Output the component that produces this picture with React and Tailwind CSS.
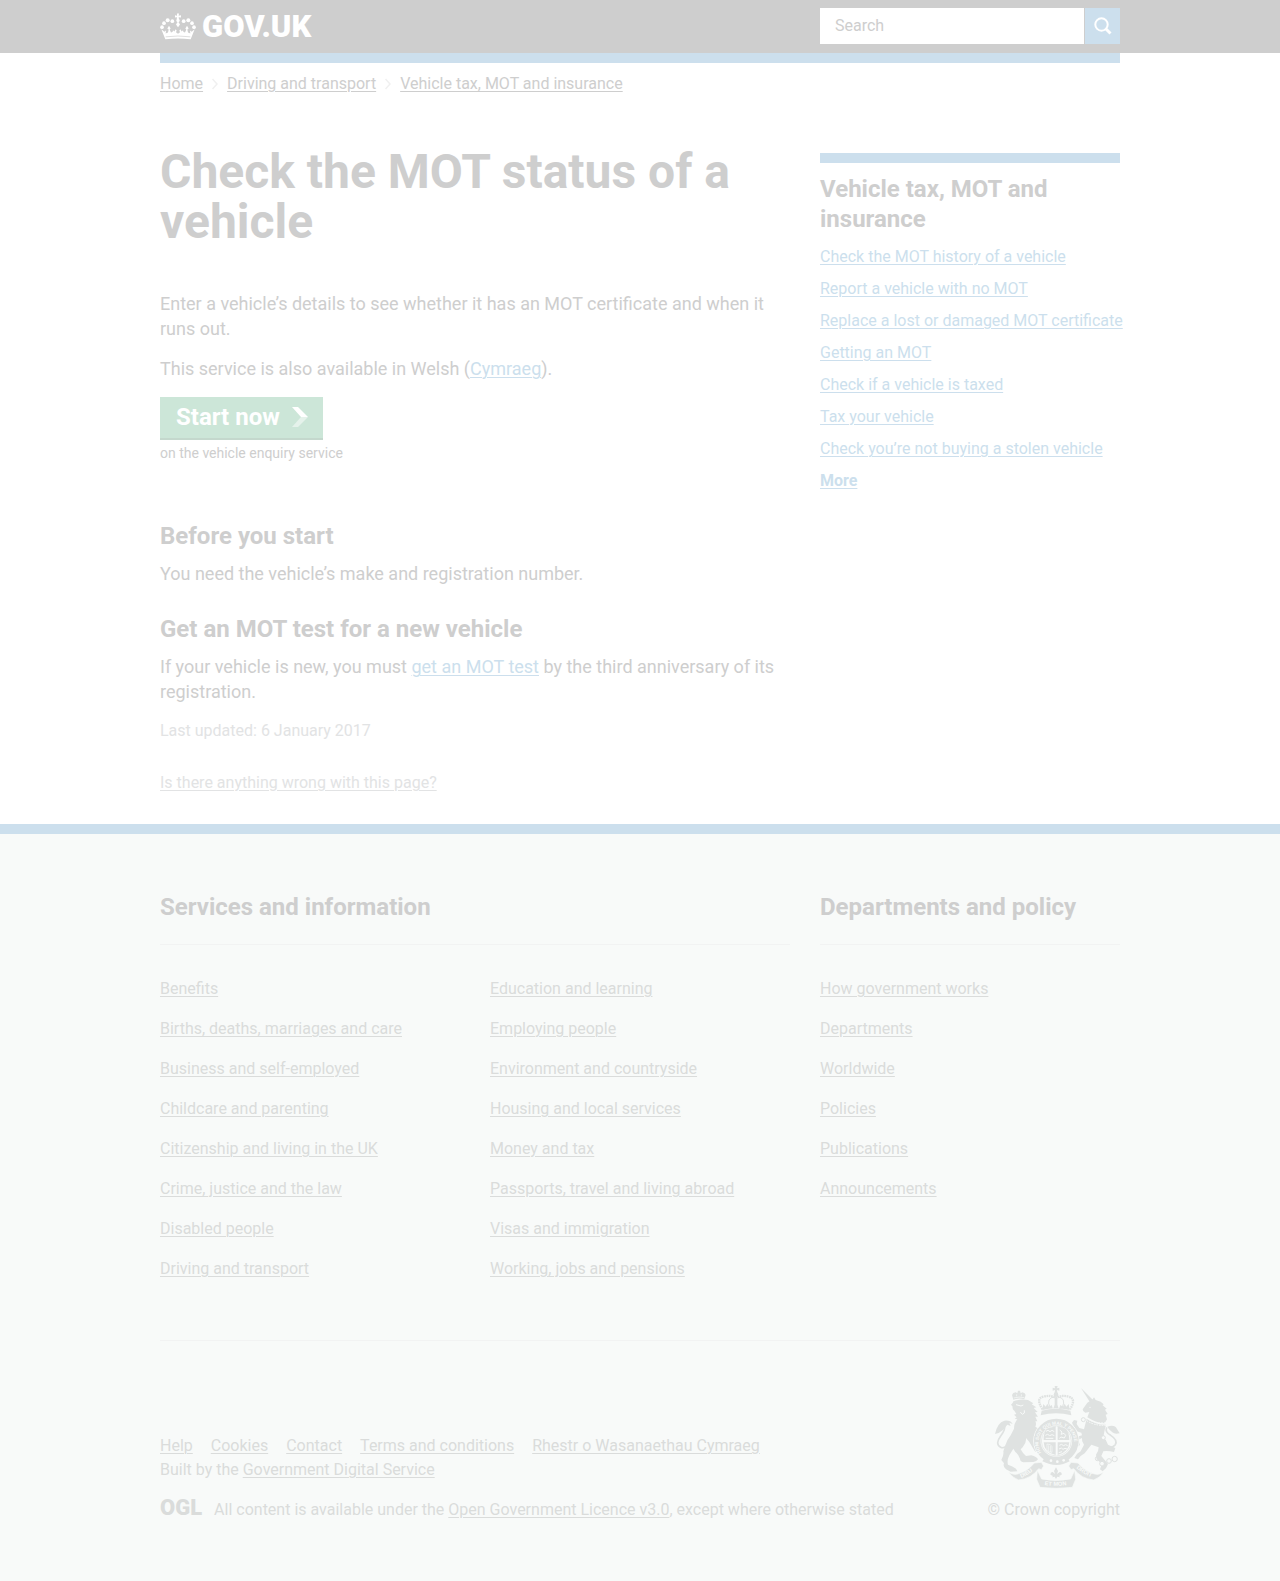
import React from "react";

const relatedLinks = [
  "Check the MOT history of a vehicle",
  "Report a vehicle with no MOT",
  "Replace a lost or damaged MOT certificate",
  "Getting an MOT",
  "Check if a vehicle is taxed",
  "Tax your vehicle",
  "Check you’re not buying a stolen vehicle",
];

const servicesLeft = [
  "Benefits",
  "Births, deaths, marriages and care",
  "Business and self-employed",
  "Childcare and parenting",
  "Citizenship and living in the UK",
  "Crime, justice and the law",
  "Disabled people",
  "Driving and transport",
];

const servicesRight = [
  "Education and learning",
  "Employing people",
  "Environment and countryside",
  "Housing and local services",
  "Money and tax",
  "Passports, travel and living abroad",
  "Visas and immigration",
  "Working, jobs and pensions",
];

const departments = [
  "How government works",
  "Departments",
  "Worldwide",
  "Policies",
  "Publications",
  "Announcements",
];

const metaLinks = [
  "Help",
  "Cookies",
  "Contact",
  "Terms and conditions",
  "Rhestr o Wasanaethau Cymraeg",
];

function Link({ children, className = "" }) {
  return (
    <a href="#" className={`underline underline-offset-2 decoration-1 ${className}`}>
      {children}
    </a>
  );
}

function CrownLogo() {
  return (
    <svg viewBox="30 36 108 80" className="h-[27px] w-[36px]" fill="#fff" aria-hidden="true">
      <path d="M81 37h6l-1 7 7-2v7l-7-1 1 7h-7l1-7-6 1v-7l6 2z" />
      <circle cx="84" cy="58" r="5" />
      <path d="M84 60l6 10-6 8-6-8z" />
      <circle cx="53" cy="57" r="6" />
      <circle cx="67" cy="60" r="5.500" />
      <circle cx="42" cy="66" r="5.500" />
      <circle cx="36" cy="78" r="5.500" />
      <circle cx="115" cy="57" r="6" />
      <circle cx="101" cy="60" r="5.500" />
      <circle cx="126" cy="66" r="5.500" />
      <circle cx="132" cy="78" r="5.500" />
      <path d="M34 84L43 92L48 88L47 97L54 94L56 85L52 82L57 74L62 82L59 85L63 94Q69 94 69 87L73 91L77 84L80 88L78 93L84 98L90 93L88 88L91 84L95 91L99 87Q99 94 105 94L109 85L106 82L111 74L116 82L112 85L114 94L121 97L120 88L125 92L134 84L122 114Q84 110 46 114z" />
      <path d="M47 107q37-5 74 0" fill="none" stroke="#cecece" strokeWidth="2" />
    </svg>
  );
}

function RoyalArms() {
  const grey = "#dfe2e1";
  const paper = "#f8faf9";
  return (
    <svg viewBox="72 45 378 312" className="h-[104px] w-[126px]" role="img" aria-label="Royal coat of arms">
      <defs>
        <path id="garter" d="M214 248A54 54 0 1 1 304 248" />
        <path id="dieu" d="M148 326Q180 314 206 286" />
        <path id="mon" d="M214 343Q258 352 306 343" />
        <path id="droit" d="M314 290Q344 318 382 326" />
      </defs>

      {/* imperial crown above the shield */}
      <g fill={grey}>
        <path d="M254 48h9l-2 7 7-2v9l-7-2 1 9h-8l1-9-7 2v-9l7 2z" />
        <circle cx="258" cy="74" r="7" />
        <path d="M215 122q43-12 86 0l3 14q-46-12-92 0z" />
        <path d="M217 120l3-18 7 8 5-9 5 9 8-5 4 12 9-20 9 20 4-12 8 5 5-9 5 9 7-8 3 18q-43-10-82 0z" />
        <path d="M254 82h8v30h-8z" />
      </g>
      <g fill="none" stroke={grey}>
        <path d="M218 118Q196 86 220 80Q242 74 258 84Q274 74 296 80Q320 86 300 118" strokeWidth="7" strokeDasharray="5 2" />
        <path d="M240 112Q226 84 256 80M277 112Q290 84 262 80" strokeWidth="3" />
      </g>

      {/* lion */}
      <g fill={grey}>
        <path d="M130 89L126 75Q128 68 137 67L142 70 144 62 150 62 152 70 157 67Q166 69 167 75L163 88Q147 83 130 89z" />
        <path d="M130 94Q150 86 174 90L190 100 185 103 199 112 191 114 203 126 195 127 204 140 196 140 202 154 196 154Q200 162 196 170L206 176 214 186 208 190 212 200 203 200 206 212 196 206 200 214 214 226 208 232 212 240 202 238 196 246 190 236 178 216 168 204Q170 218 158 232L152 238Q158 250 168 258L184 256Q200 260 204 268 200 275 190 276L160 277Q150 274 150 266 146 254 136 246L130 236 118 256Q110 272 114 284 128 288 138 296L142 304 122 305 108 298Q98 290 102 280L94 270Q102 256 100 244L106 226Q112 208 122 196L132 176Q132 160 142 148L134 146 140 142 132 134 139 132 133 122Q126 118 128 110L123 104Q129 100 130 94z" />
        <path d="M75 192Q82 158 103 152 122 150 128 162L118 158 122 168 112 164 99 180Q88 190 75 192z" />
      </g>
      <path d="M103 162Q108 178 92 198 74 222 92 232 100 236 110 228" fill="none" stroke={grey} strokeWidth="5" />
      <g fill="none" stroke={paper}>
        <path d="M138 104l15 4 7-3M163 121v8l-6 4-6-7" strokeWidth="3" />
        <path d="M131 84q16-5 32-1M140 73v6M154 73v6" strokeWidth="2" />
      </g>

      {/* unicorn */}
      <g fill={grey}>
        <path d="M333 54L369 90 359 95z" />
        <path d="M338 118L352 98 368 88 372 82 377 90 392 95 401 103 398 106 410 116 405 119 413 132 407 134 411 148 404 160Q380 160 352 142L358 126 346 128Q338 126 338 118z" />
        <path d="M350 146Q380 166 408 164L404 180 400 202Q410 210 414 224L436 234 432 246Q414 242 400 244L394 258 414 282Q410 296 398 304L390 298 396 282 380 268 378 254Q386 244 386 232L364 224 344 250Q332 256 324 268L313 264Q320 250 332 244L342 224Q334 214 336 204L324 210 330 224 324 230 316 214Q320 200 336 196L334 188 320 184 312 172 306 158 312 150 322 152 320 162 328 174 342 178z" />
        <path d="M412 170Q434 162 441 177L449 190Q434 194 427 187L417 178z" />
      </g>
      <path d="M410 172Q404 186 422 196 444 210 436 224 428 234 412 232" fill="none" stroke={grey} strokeWidth="5" />
      <path d="M349 144q24 18 59 14M350 152q24 16 58 14" fill="none" stroke={paper} strokeWidth="3" strokeDasharray="5 3" />
      <circle cx="360" cy="112" r="2" fill={paper} />
      <g fill="none" stroke={grey} strokeWidth="3">
        <circle cx="382" cy="266" r="6" />
        <circle cx="396" cy="281" r="7" fill={paper} />
        <circle cx="417" cy="273" r="7" />
        <circle cx="434" cy="267" r="8" />
        <circle cx="400" cy="203" r="6" fill={paper} />
        <circle cx="340" cy="149" r="6" />
      </g>

      {/* garter and shield */}
      <circle cx="259" cy="213" r="68" fill="none" stroke={paper} strokeWidth="3" />
      <circle cx="259" cy="213" r="57" fill="none" stroke={grey} strokeWidth="19" />
      <circle cx="259" cy="213" r="45" fill={paper} stroke={grey} strokeWidth="2" />
      <text fill={paper} fontSize="14" fontWeight="700" fontFamily="Liberation Sans, sans-serif">
        <textPath href="#garter">HONI SOIT QUI MAL Y PENSE</textPath>
      </text>
      <g fill={grey}>
        <path d="M230 176l27-7v41h-36q-1-20 9-34zM263 169l25 7q10 14 10 34h-35zM221 217h36v38q-34-6-36-38zM263 217h35q-2 30-35 38z" />
      </g>
      <g fill="none" stroke={paper} strokeWidth="3">
        <path d="M228 184l6-3 6 4 6-4 7 4M226 196l7-3 6 4 7-3 7 3M227 205h23" />
        <path d="M269 180l7 6-3 7 9-3 5 6-4 8-10-3-5 4" />
        <path d="M268 226l7-3 5 4 7-3 6 3M267 237l7-3 5 4 6-3 6 2M266 248l10-3" />
        <path d="M231 222v17q2 8 15 8V230q-3-8-15-8M236 226v17M241 228v18" strokeWidth="2" />
      </g>
      <path d="M225 262q32 18 66 0l8 12q-38 22-82 0z" fill={grey} />
      <g fill={paper}>
        <circle cx="243" cy="272" r="4" />
        <circle cx="262" cy="275" r="4" />
        <circle cx="281" cy="271" r="4" />
      </g>

      {/* motto scroll */}
      <g fill={grey} stroke={paper} strokeWidth="2">
        <path d="M116 307Q132 316 143 312 172 304 193 279L214 277 221 288 214 299 206 296Q184 326 146 330 128 324 116 307z" />
        <path d="M401 307Q385 316 374 312 345 304 324 279L303 277 296 288 303 299 311 296Q333 326 371 330 389 324 401 307z" />
        <path d="M202 301L215 327Q258 336 302 327L314 301 317 328 307 352Q258 358 210 352L200 328z" />
      </g>
      <path d="M258 292l6 11-3 9 8-6q7 0 6 8l-8 4 4 4-9-2-4 7-4-7-8 2 3-4-8-4q0-9 7-8l7 6-3-9z" fill={grey} />
      <g fill={paper} fontSize="17" fontWeight="700" fontFamily="Liberation Sans, sans-serif">
        <text><textPath href="#dieu" startOffset="6">DIEU</textPath></text>
        <text><textPath href="#mon" startOffset="10">ET MON</textPath></text>
        <text><textPath href="#droit" startOffset="6">DROIT</textPath></text>
      </g>
    </svg>
  );
}

function Header() {
  return (
    <header>
      <div className="bg-[#cecece]">
        <div className="mx-auto grid max-w-[960px] grid-cols-3 gap-x-[30px] pt-2 pb-[9px]">
          <a href="#" aria-label="GOV.UK" className="col-span-2 flex h-9 items-center gap-1.5">
            <CrownLogo />
            <span className="pt-0.5 text-[31px] leading-9 font-black text-white">GOV.UK</span>
          </a>
          <form className="flex h-9" onSubmit={(e) => e.preventDefault()}>
            <input
              type="search"
              aria-label="Search"
              placeholder="Search"
              className="h-9 min-w-0 flex-1 bg-white px-[15px] pb-0.5 text-base text-[#cecece] outline-none placeholder:text-[#cecece]"
            />
            <button type="submit" aria-label="Search" className="ml-px flex w-[35px] items-center justify-center bg-[#ccdfed]">
              <svg viewBox="0 0 18 18" className="size-[18px]" fill="none" stroke="#fff" aria-hidden="true">
                <circle cx="7.500" cy="7.500" r="6.200" strokeWidth="2" />
                <path d="M12 12l4.500 4.500" strokeWidth="3" />
              </svg>
            </button>
          </form>
        </div>
      </div>
      <div className="mx-auto h-2.5 max-w-[960px] bg-[#ccdfed]" />
    </header>
  );
}

function Breadcrumbs() {
  const crumbs = ["Home", "Driving and transport", "Vehicle tax, MOT and insurance"];
  return (
    <nav aria-label="Breadcrumbs" className="pt-[11px]">
      <ol className="flex text-base leading-5 text-[#cecece]">
        {crumbs.map((crumb, i) => (
          <li key={crumb} className="flex items-center">
            {i > 0 && (
              <svg viewBox="0 0 6 12" className="mx-[9px] h-3 w-1.5" fill="none" stroke="#f0f0f0" strokeWidth="1.500" aria-hidden="true">
                <path d="M.5 1l4.500 5-4.500 5" />
              </svg>
            )}
            <Link>{crumb}</Link>
          </li>
        ))}
      </ol>
    </nav>
  );
}

function Article() {
  return (
    <article className="col-span-2 text-lg leading-[25px] text-[#cecece]">
      <h1 className="text-[48px] leading-[50px] font-bold">Check the MOT status of a vehicle</h1>
      <p className="mt-11">
        Enter a vehicle’s details to see whether it has an MOT certificate and when it runs out.
      </p>
      <p className="mt-[15px]">
        This service is also available in Welsh (<Link className="text-[#ccdfed]">Cymraeg</Link>).
      </p>
      <a
        href="#"
        className="mt-4 flex h-[43px] w-fit items-center gap-3 border-b-2 border-[#c4d8cd] bg-[#cce6d8] pr-[15px] pb-0.5 pl-4 text-2xl font-bold text-white"
      >
        Start now
        <svg viewBox="0 0 16 20" className="h-5 w-4" aria-hidden="true">
          <path d="M0 0h6l10 10h-7z" fill="#fff" />
          <path d="M9 10h7L6 20H0z" fill="#e5f2eb" />
        </svg>
      </a>
      <p className="mt-[3px] text-sm leading-5">on the vehicle enquiry service</p>
      <h2 className="mt-[58px] text-2xl leading-[30px] font-bold">Before you start</h2>
      <p className="mt-[10px]">You need the vehicle’s make and registration number.</p>
      <h2 className="mt-7 text-2xl leading-[30px] font-bold">Get an MOT test for a new vehicle</h2>
      <p className="mt-[10px]">
        If your vehicle is new, you must <Link className="text-[#ccdfed]">get an MOT test</Link> by the third
        anniversary of its registration.
      </p>
      <p className="mt-[17px] text-base leading-5 text-[#e2e3e4]">Last updated: 6 January 2017</p>
      <p className="mt-8 text-base leading-5 text-[#e2e3e4]">
        <Link>Is there anything wrong with this page?</Link>
      </p>
    </article>
  );
}

function Related() {
  return (
    <aside className="mt-1.5 border-t-10 border-[#ccdfed] pt-[11px]">
      <h2 className="text-2xl leading-[30px] font-bold text-[#cecece]">Vehicle tax, MOT and insurance</h2>
      <ul className="mt-[13px] space-y-3 text-base leading-5 whitespace-nowrap text-[#ccdfed]">
        {relatedLinks.map((label) => (
          <li key={label}>
            <Link>{label}</Link>
          </li>
        ))}
        <li className="font-bold">
          <Link>More</Link>
        </li>
      </ul>
    </aside>
  );
}

function LinkList({ items }) {
  return (
    <ul className="space-y-5 leading-5">
      {items.map((label) => (
        <li key={label}>
          <Link>{label}</Link>
        </li>
      ))}
    </ul>
  );
}

function Footer() {
  const heading = "mb-[34px] border-b border-[#f2f3f3] pb-[22px] text-2xl leading-[30px] font-bold text-[#cecece]";
  return (
    <footer className="border-t-10 border-[#ccdfed] bg-[#f8faf9] text-base text-[#dadcdb]">
      <div className="mx-auto max-w-[960px] pt-[58px] pb-[61px]">
        <div className="grid grid-cols-3 gap-x-[30px] border-b border-[#f2f3f3] pb-[61px]">
          <section className="col-span-2">
            <h2 className={heading}>Services and information</h2>
            <div className="grid grid-cols-2 gap-x-[30px]">
              <LinkList items={servicesLeft} />
              <LinkList items={servicesRight} />
            </div>
          </section>
          <section>
            <h2 className={heading}>Departments and policy</h2>
            <LinkList items={departments} />
          </section>
        </div>
        <div className="mt-11 flex items-end justify-between">
          <div>
            <ul className="flex gap-[18px] leading-6">
              {metaLinks.map((label) => (
                <li key={label}>
                  <Link>{label}</Link>
                </li>
              ))}
            </ul>
            <p className="leading-6">
              Built by the <Link>Government Digital Service</Link>
            </p>
            <div className="mt-[18px] flex items-center gap-3 leading-5">
              <span className="pb-1 text-[22px] leading-4 font-black">OGL</span>
              <p>
                All content is available under the <Link>Open Government Licence v3.0</Link>, except where otherwise
                stated
              </p>
            </div>
          </div>
          <a href="#" className="flex flex-col items-end gap-[11px] leading-5">
            <RoyalArms />
            <span>© Crown copyright</span>
          </a>
        </div>
      </div>
    </footer>
  );
}

export default function App() {
  return (
    <div className="min-h-screen bg-white font-['Roboto','Liberation_Sans',sans-serif]">
      <Header />
      <div className="mx-auto max-w-[960px]">
        <Breadcrumbs />
        <main className="mt-[53px] grid grid-cols-3 items-start gap-x-[30px] pb-[31px]">
          <Article />
          <Related />
        </main>
      </div>
      <Footer />
    </div>
  );
}
